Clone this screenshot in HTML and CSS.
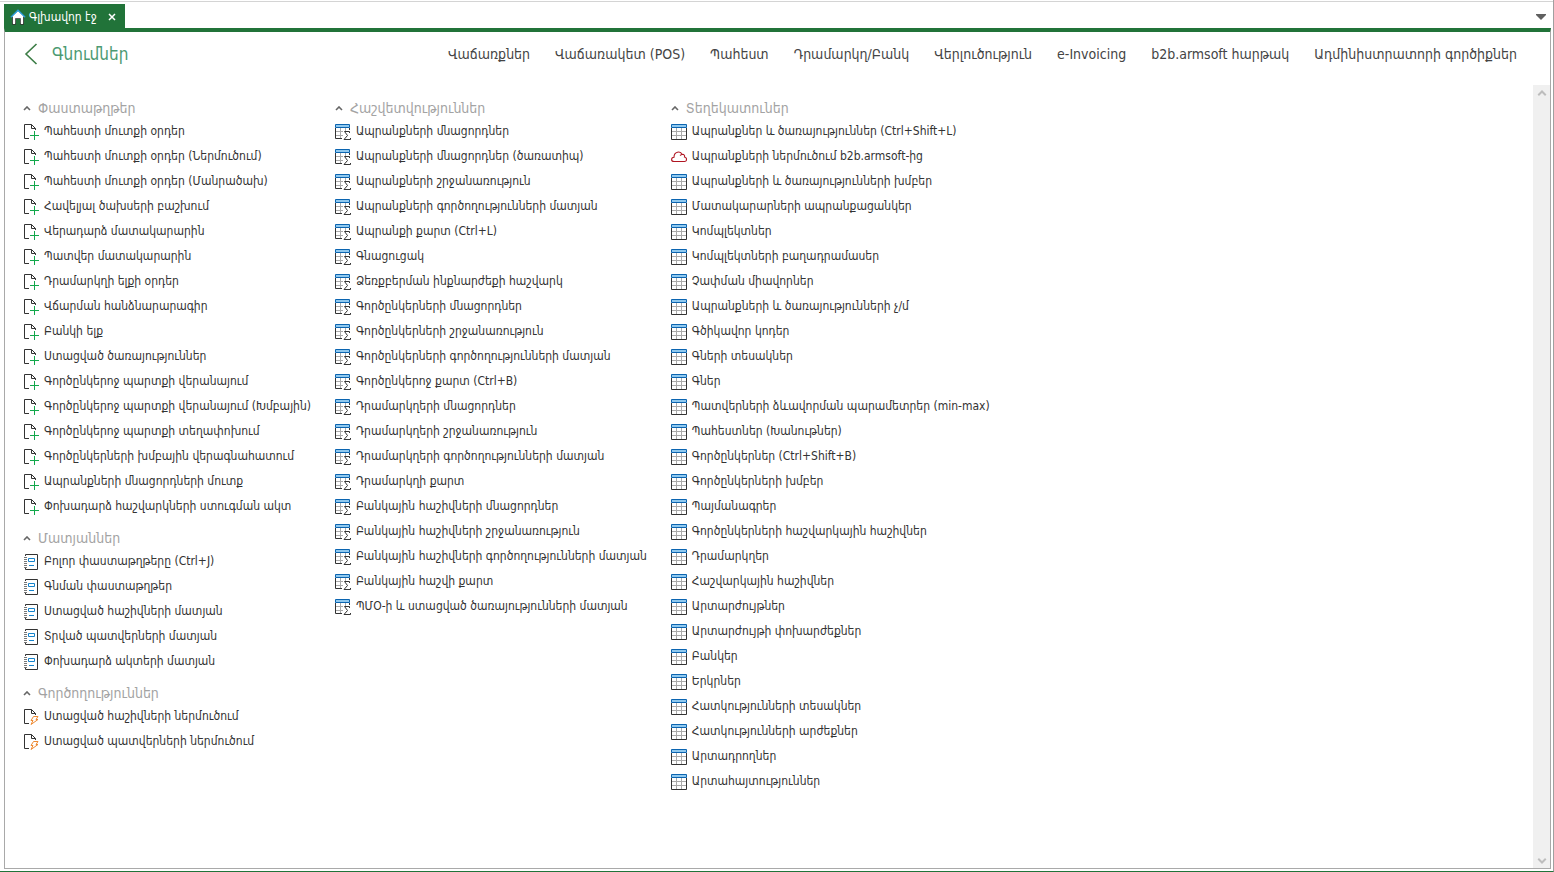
FILE: index.html
```html
<!DOCTYPE html>
<html lang="hy">
<head>
<meta charset="utf-8">
<title>Գլխավոր էջ</title>
<link rel="stylesheet" href="styles.css">
</head>
<body>
<svg class="sprite" aria-hidden="true">
  <symbol id="doc-add" viewBox="0 0 16 16">
    <path d="M6 14.5H1.500V.5H8.500L12.500 4.500V6M8.500.5V4.500H12.500" fill="none" stroke="#333"/>
    <path d="M11.500 7V16M7 11.500H16" fill="none" stroke="#12a84c"/>
  </symbol>
  <symbol id="doc-run" viewBox="0 0 16 16">
    <path d="M6 14.500H1.500V.5H8.500L12.500 4.500V6M8.500.5V4.500H12.500" fill="none" stroke="#333"/>
    <path d="M10.500 7.500H15L13 10.500H15L8 15.500L10 11.500H8Z" fill="#fff" stroke="#ee8a32"/>
  </symbol>
  <symbol id="journal" viewBox="0 0 16 16">
    <path d="M2.500 2V.5H14.500V15.500H2.500V14" fill="none" stroke="#333"/>
    <path d="M1 3.500H4M1 5.500H4M1 7.500H4M1 9.500H4M1 11.500H4M1 13.500H4" stroke="#777"/>
    <path d="M5.500 4.500H11.500V7.500H5.500ZM6 11.500H11" fill="none" stroke="#1583cc"/>
  </symbol>
  <symbol id="table" viewBox="0 0 16 16">
    <path d="M5.500 4V15M10.500 4V15M1 7.500H15M1 11.500H15" stroke="#aaa"/>
    <path d="M.5 4V15.500H15.500V4" fill="none" stroke="#333"/>
    <path d="M.5.5H15.500V3.500H.5Z" fill="#8fc8ee" stroke="#0b64b0"/>
  </symbol>
  <symbol id="table-sum" viewBox="0 0 16 16">
    <path d="M5.500 4V14M10.500 4V7M1 7.500H8M1 11.500H8" stroke="#aaa"/>
    <path d="M.5 4V14.500H7M14.500 4V6" fill="none" stroke="#333"/>
    <path d="M.5.5H14.500V3.500H.5Z" fill="#8fc8ee" stroke="#0b64b0"/>
    <path d="M14.500 9V7.500H9.500L12.500 11.500L9 15.500H15.500V14" fill="none" stroke="#333"/>
  </symbol>
  <symbol id="cloud" viewBox="0 0 16 16">
    <path d="M3 12.500C-.2 12.500-.2 8.500 3 8.200C3 2.500 9.500 1.500 11 5.500C13 5 14 6.500 13.500 8C16.200 8.500 16.200 12.500 13.500 12.500ZM11 5.500C10 5.700 9.500 6 9 6.500" fill="none" stroke="#b01522" stroke-width="1.100"/>
  </symbol>
  <symbol id="up" viewBox="0 0 8 6">
    <path d="M1 4L4 1L7 4" fill="none" stroke="currentColor" stroke-width="1.600"/>
  </symbol>
</svg>

<div class="tabbar">
  <div class="tab">
    <svg class="home" viewBox="0 0 16 16" aria-hidden="true"><path d="M2.500 7V14.500H13.500V7L8 2Z" fill="#fff"/><path d="M3 8V15H5V9H11V15H13V8L8 3Z" fill="#fff"/><path d="M2.500 8V15.500H5.500V9.500H10.500V15.500H13.500V8" fill="none" stroke="#333" stroke-width=".8"/><path d="M6 10H10V16H6Z" fill="#217339"/><path d="M.8 8.200L8 1.200L15.200 8.200" fill="none" stroke="#2b9be0" stroke-width="1.200"/></svg>
    <span>Գլխավոր էջ</span>
    <button class="close" type="button" aria-label="Փակել"><svg viewBox="0 0 8 8"><path d="M1 1L7 7M7 1L1 7" stroke="currentColor" stroke-width="1.500"/></svg></button>
  </div>
  <button class="tab-list" type="button" aria-label="Էջանիշեր"><svg viewBox="0 0 10 6"><path d="M0 0H10V1L5 6L0 1Z" fill="#606060"/></svg></button>
</div>

<main class="panel">
  <header class="top">
    <button class="back" type="button" aria-label="Հետ"><svg viewBox="0 0 14 22"><path d="M12.500 1L2 11L12.500 21" fill="none" stroke="currentColor" stroke-width="1.600"/></svg></button>
    <h1>Գնումներ</h1>
    <nav>
      <a href="#">Վաճառքներ</a>
      <a href="#">Վաճառակետ (POS)</a>
      <a href="#">Պահեստ</a>
      <a href="#">Դրամարկղ/Բանկ</a>
      <a href="#">Վերլուծություն</a>
      <a href="#">e-Invoicing</a>
      <a href="#">b2b.armsoft հարթակ</a>
      <a href="#">Ադմինիստրատորի գործիքներ</a>
    </nav>
  </header>

  <div class="content">
    <div class="columns">
      <div class="column">
        <section>
          <h2><button type="button"><svg><use href="#up"/></svg>Փաստաթղթեր</button></h2>
          <ul>
            <li><a href="#"><svg><use href="#doc-add"/></svg>Պահեստի մուտքի օրդեր</a></li>
            <li><a href="#"><svg><use href="#doc-add"/></svg>Պահեստի մուտքի օրդեր (Ներմուծում)</a></li>
            <li><a href="#"><svg><use href="#doc-add"/></svg>Պահեստի մուտքի օրդեր (Մանրածախ)</a></li>
            <li><a href="#"><svg><use href="#doc-add"/></svg>Հավելյալ ծախսերի բաշխում</a></li>
            <li><a href="#"><svg><use href="#doc-add"/></svg>Վերադարձ մատակարարին</a></li>
            <li><a href="#"><svg><use href="#doc-add"/></svg>Պատվեր մատակարարին</a></li>
            <li><a href="#"><svg><use href="#doc-add"/></svg>Դրամարկղի ելքի օրդեր</a></li>
            <li><a href="#"><svg><use href="#doc-add"/></svg>Վճարման հանձնարարագիր</a></li>
            <li><a href="#"><svg><use href="#doc-add"/></svg>Բանկի ելք</a></li>
            <li><a href="#"><svg><use href="#doc-add"/></svg>Ստացված ծառայություններ</a></li>
            <li><a href="#"><svg><use href="#doc-add"/></svg>Գործընկերոջ պարտքի վերանայում</a></li>
            <li><a href="#"><svg><use href="#doc-add"/></svg>Գործընկերոջ պարտքի վերանայում (Խմբային)</a></li>
            <li><a href="#"><svg><use href="#doc-add"/></svg>Գործընկերոջ պարտքի տեղափոխում</a></li>
            <li><a href="#"><svg><use href="#doc-add"/></svg>Գործընկերների խմբային վերագնահատում</a></li>
            <li><a href="#"><svg><use href="#doc-add"/></svg>Ապրանքների մնացորդների մուտք</a></li>
            <li><a href="#"><svg><use href="#doc-add"/></svg>Փոխադարձ հաշվարկների ստուգման ակտ</a></li>
          </ul>
        </section>
        <section>
          <h2><button type="button"><svg><use href="#up"/></svg>Մատյաններ</button></h2>
          <ul>
            <li><a href="#"><svg><use href="#journal"/></svg>Բոլոր փաստաթղթերը (Ctrl+J)</a></li>
            <li><a href="#"><svg><use href="#journal"/></svg>Գնման փաստաթղթեր</a></li>
            <li><a href="#"><svg><use href="#journal"/></svg>Ստացված հաշիվների մատյան</a></li>
            <li><a href="#"><svg><use href="#journal"/></svg>Տրված պատվերների մատյան</a></li>
            <li><a href="#"><svg><use href="#journal"/></svg>Փոխադարձ ակտերի մատյան</a></li>
          </ul>
        </section>
        <section>
          <h2><button type="button"><svg><use href="#up"/></svg>Գործողություններ</button></h2>
          <ul>
            <li><a href="#"><svg><use href="#doc-run"/></svg>Ստացված հաշիվների ներմուծում</a></li>
            <li><a href="#"><svg><use href="#doc-run"/></svg>Ստացված պատվերների ներմուծում</a></li>
          </ul>
        </section>
      </div>

      <div class="column">
        <section>
          <h2><button type="button"><svg><use href="#up"/></svg>Հաշվետվություններ</button></h2>
          <ul>
            <li><a href="#"><svg><use href="#table-sum"/></svg>Ապրանքների մնացորդներ</a></li>
            <li><a href="#"><svg><use href="#table-sum"/></svg>Ապրանքների մնացորդներ (ծառատիպ)</a></li>
            <li><a href="#"><svg><use href="#table-sum"/></svg>Ապրանքների շրջանառություն</a></li>
            <li><a href="#"><svg><use href="#table-sum"/></svg>Ապրանքների գործողությունների մատյան</a></li>
            <li><a href="#"><svg><use href="#table-sum"/></svg>Ապրանքի քարտ (Ctrl+L)</a></li>
            <li><a href="#"><svg><use href="#table-sum"/></svg>Գնացուցակ</a></li>
            <li><a href="#"><svg><use href="#table-sum"/></svg>Ձեռքբերման ինքնարժեքի հաշվարկ</a></li>
            <li><a href="#"><svg><use href="#table-sum"/></svg>Գործընկերների մնացորդներ</a></li>
            <li><a href="#"><svg><use href="#table-sum"/></svg>Գործընկերների շրջանառություն</a></li>
            <li><a href="#"><svg><use href="#table-sum"/></svg>Գործընկերների գործողությունների մատյան</a></li>
            <li><a href="#"><svg><use href="#table-sum"/></svg>Գործընկերոջ քարտ (Ctrl+B)</a></li>
            <li><a href="#"><svg><use href="#table-sum"/></svg>Դրամարկղերի մնացորդներ</a></li>
            <li><a href="#"><svg><use href="#table-sum"/></svg>Դրամարկղերի շրջանառություն</a></li>
            <li><a href="#"><svg><use href="#table-sum"/></svg>Դրամարկղերի գործողությունների մատյան</a></li>
            <li><a href="#"><svg><use href="#table-sum"/></svg>Դրամարկղի քարտ</a></li>
            <li><a href="#"><svg><use href="#table-sum"/></svg>Բանկային հաշիվների մնացորդներ</a></li>
            <li><a href="#"><svg><use href="#table-sum"/></svg>Բանկային հաշիվների շրջանառություն</a></li>
            <li><a href="#"><svg><use href="#table-sum"/></svg>Բանկային հաշիվների գործողությունների մատյան</a></li>
            <li><a href="#"><svg><use href="#table-sum"/></svg>Բանկային հաշվի քարտ</a></li>
            <li><a href="#"><svg><use href="#table-sum"/></svg>ՊՄՕ-ի և ստացված ծառայությունների մատյան</a></li>
          </ul>
        </section>
      </div>

      <div class="column">
        <section>
          <h2><button type="button"><svg><use href="#up"/></svg>Տեղեկատուներ</button></h2>
          <ul>
            <li><a href="#"><svg><use href="#table"/></svg>Ապրանքներ և ծառայություններ (Ctrl+Shift+L)</a></li>
            <li><a href="#"><svg><use href="#cloud"/></svg>Ապրանքների ներմուծում b2b.armsoft-ից</a></li>
            <li><a href="#"><svg><use href="#table"/></svg>Ապրանքների և ծառայությունների խմբեր</a></li>
            <li><a href="#"><svg><use href="#table"/></svg>Մատակարարների ապրանքացանկեր</a></li>
            <li><a href="#"><svg><use href="#table"/></svg>Կոմպլեկտներ</a></li>
            <li><a href="#"><svg><use href="#table"/></svg>Կոմպլեկտների բաղադրամասեր</a></li>
            <li><a href="#"><svg><use href="#table"/></svg>Չափման միավորներ</a></li>
            <li><a href="#"><svg><use href="#table"/></svg>Ապրանքների և ծառայությունների չ/մ</a></li>
            <li><a href="#"><svg><use href="#table"/></svg>Գծիկավոր կոդեր</a></li>
            <li><a href="#"><svg><use href="#table"/></svg>Գների տեսակներ</a></li>
            <li><a href="#"><svg><use href="#table"/></svg>Գներ</a></li>
            <li><a href="#"><svg><use href="#table"/></svg>Պատվերների ձևավորման պարամետրեր (min-max)</a></li>
            <li><a href="#"><svg><use href="#table"/></svg>Պահեստներ (Խանութներ)</a></li>
            <li><a href="#"><svg><use href="#table"/></svg>Գործընկերներ (Ctrl+Shift+B)</a></li>
            <li><a href="#"><svg><use href="#table"/></svg>Գործընկերների խմբեր</a></li>
            <li><a href="#"><svg><use href="#table"/></svg>Պայմանագրեր</a></li>
            <li><a href="#"><svg><use href="#table"/></svg>Գործընկերների հաշվարկային հաշիվներ</a></li>
            <li><a href="#"><svg><use href="#table"/></svg>Դրամարկղեր</a></li>
            <li><a href="#"><svg><use href="#table"/></svg>Հաշվարկային հաշիվներ</a></li>
            <li><a href="#"><svg><use href="#table"/></svg>Արտարժույթներ</a></li>
            <li><a href="#"><svg><use href="#table"/></svg>Արտարժույթի փոխարժեքներ</a></li>
            <li><a href="#"><svg><use href="#table"/></svg>Բանկեր</a></li>
            <li><a href="#"><svg><use href="#table"/></svg>Երկրներ</a></li>
            <li><a href="#"><svg><use href="#table"/></svg>Հատկությունների տեսակներ</a></li>
            <li><a href="#"><svg><use href="#table"/></svg>Հատկությունների արժեքներ</a></li>
            <li><a href="#"><svg><use href="#table"/></svg>Արտադրողներ</a></li>
            <li><a href="#"><svg><use href="#table"/></svg>Արտահայտություններ</a></li>
          </ul>
        </section>
      </div>
    </div>
    <div class="scrollbar">
      <button type="button" aria-label="Վերև"><svg><use href="#up"/></svg></button>
      <button class="down" type="button" aria-label="Ներքև"><svg><use href="#up"/></svg></button>
    </div>
  </div>
</main>
</body>
</html>
```
FILE: styles.css
```css
* {
  box-sizing: border-box;
}

body {
  margin: 0;
  padding: 1px 0 0;
  min-height: 100vh;
  display: flex;
  flex-direction: column;
  background: #fff;
  border-right: 1px solid #a0a0a0;
  border-bottom: 1px solid #217339;
  color: #333;
  font: 12px/14px "DejaVu Sans Condensed", "DejaVu Sans", sans-serif;
}

.sprite {
  position: absolute;
  width: 0;
  height: 0;
}

button {
  border: 0;
  padding: 0;
  background: none;
  color: inherit;
  font: inherit;
  display: flex;
  align-items: center;
  cursor: pointer;
}

a {
  color: inherit;
  text-decoration: none;
}

h1,
h2,
ul {
  margin: 0;
  padding: 0;
  font-weight: normal;
  list-style: none;
}

.tabbar {
  display: flex;
  justify-content: space-between;
  align-items: center;
  border-top: 1px solid #d4d4d4;
  padding: 2px 7px 0 4px;
}

.tab {
  display: flex;
  align-items: center;
  height: 24px;
  padding: 2px 9px 0 6px;
  background: #217339;
  color: #fff;
}

.home {
  width: 16px;
  height: 16px;
  margin-right: 3px;
}

.close {
  margin-left: 11px;
}

.close svg {
  width: 8px;
  height: 8px;
}

.tab-list {
  padding-top: 2px;
}

.tab-list svg {
  width: 10px;
  height: 6px;
}

.panel {
  flex: 1;
  display: flex;
  flex-direction: column;
  margin: 0 2px 2px 4px;
  border: 1px solid #a9a9a9;
  border-top: 4px solid #217339;
}

.top {
  display: flex;
  align-items: center;
  height: 44px;
  padding: 0 33px 0 19px;
}

.back {
  color: #3c7d46;
}

.back svg {
  width: 14px;
  height: 22px;
}

h1 {
  margin-left: 14px;
  color: #4c9a72;
  font-size: 17px;
  line-height: 20px;
}

nav {
  display: flex;
  gap: 25px;
  margin-left: auto;
  color: #444;
  font-size: 14px;
  line-height: 18px;
  white-space: nowrap;
}

.content {
  flex: 1;
  display: flex;
  justify-content: space-between;
  margin-top: 9px;
}

.columns {
  display: flex;
  gap: 24px;
  padding: 13px 0 0 18px;
}

section {
  margin-bottom: 9px;
}

h2 {
  color: #a3a3a3;
  font-size: 14px;
  line-height: 21px;
}

h2 svg {
  width: 8px;
  height: 6px;
  margin-right: 7px;
  color: #666;
}

li a {
  display: flex;
  gap: 5px;
  padding: 5px 0 4px;
  white-space: nowrap;
}

li svg {
  width: 16px;
  height: 16px;
}

.scrollbar {
  display: flex;
  flex-direction: column;
  justify-content: space-between;
  width: 17px;
  background: #f0f0f0;
  color: #bdbdbd;
}

.scrollbar button {
  justify-content: center;
  height: 17px;
}

.scrollbar svg {
  width: 10px;
  height: 8px;
}

.down svg {
  transform: rotate(180deg);
}
```
